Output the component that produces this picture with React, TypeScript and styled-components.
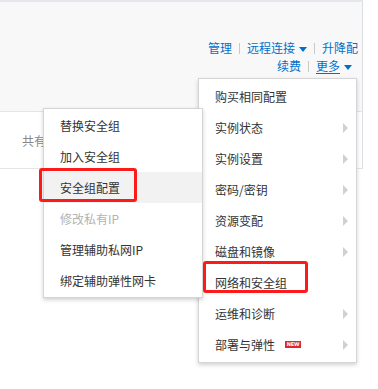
import React from "react";
import styled, { createGlobalStyle } from "styled-components";

const Global = createGlobalStyle`
  html, body { margin: 0; padding: 0; background: #fff; }
  body { font-family: "Noto Sans CJK SC", "Noto Sans", sans-serif; font-size: 12px; color: #333; }
`;

const Page = styled.div`
  position: relative;
  width: 378px;
  height: 389px;
  overflow: hidden;
  background: #fff;
`;

const Panel = styled.div`
  width: 362px;
  border-top: 2px solid #e4e8ec;
  border-right: 1px solid #dcdfe3;
  display: flex;
  flex-direction: column;
`;

const Header = styled.div`
  height: 110px;
  background: #f8f8f8;
  border-bottom: 1px solid #e5e5e5;
  display: flex;
  flex-direction: column;
  align-items: flex-end;
  padding: 37px 4px 0 0;
  box-sizing: border-box;
`;

const ActionRow = styled.div`
  display: flex;
  align-items: center;
  height: 18px;
  line-height: 18px;
`;

const Link = styled.span<{ $underline?: boolean }>`
  color: #0070cc;
  font-size: 12px;
  white-space: nowrap;
  text-decoration: ${(p) => (p.$underline ? "underline" : "none")};
  text-underline-offset: 2px;
  display: inline-flex;
  align-items: center;
`;

const Sep = styled.span`
  display: inline-block;
  width: 1px;
  height: 11px;
  background: #c9c9c9;
  margin: 0 7px;
`;

const Caret = styled.span`
  display: inline-block;
  width: 0;
  height: 0;
  border-left: 4px solid transparent;
  border-right: 4px solid transparent;
  border-top: 5px solid #0070cc;
  margin-left: 4px;
  margin-top: 2px;
`;

const Spacer = styled.span`
  width: 6px;
`;

const InfoRow = styled.div`
  height: 56px;
  border-bottom: 1px solid #e5e5e5;
  display: flex;
  align-items: center;
  padding-left: 22px;
  color: #888;
  font-size: 12px;
`;

const Menu = styled.div<{ $left: number; $top: number; $width: number; $z: number }>`
  position: absolute;
  left: ${(p) => p.$left}px;
  top: ${(p) => p.$top}px;
  width: ${(p) => p.$width}px;
  z-index: ${(p) => p.$z};
  background: #fff;
  border: 1px solid #d5d5d5;
  box-shadow: 0 2px 4px rgba(0, 0, 0, 0.18);
  box-sizing: border-box;
  display: flex;
  flex-direction: column;
`;

const MenuList = styled.div<{ $pad: number }>`
  padding: ${(p) => p.$pad}px 0;
  display: flex;
  flex-direction: column;
`;

const Item = styled.div<{ $active?: boolean; $disabled?: boolean }>`
  height: 31px;
  display: flex;
  align-items: center;
  padding: 0 8px 0 16px;
  font-size: 12px;
  color: ${(p) => (p.$disabled ? "#b3b3b3" : "#333")};
  background: ${(p) => (p.$active ? "#f2f2f2" : "transparent")};
  white-space: nowrap;
`;

const Label = styled.span`
  flex: 1;
  display: flex;
  align-items: center;
`;

const Arrow = styled.span`
  width: 0;
  height: 0;
  border-top: 5px solid transparent;
  border-bottom: 5px solid transparent;
  border-left: 5px solid #d0d0d0;
`;

const NewBadge = styled.span`
  display: inline-flex;
  align-items: center;
  justify-content: center;
  width: 16px;
  height: 7px;
  margin-left: 10px;
  background: #e0262e;
  color: #fff;
  font-family: "DejaVu Sans", sans-serif;
  font-size: 5px;
  font-weight: bold;
  line-height: 7px;
  letter-spacing: -0.2px;
`;

const Highlight = styled.div<{ $left: number; $top: number; $w: number; $h: number }>`
  position: absolute;
  left: ${(p) => p.$left}px;
  top: ${(p) => p.$top}px;
  width: ${(p) => p.$w}px;
  height: ${(p) => p.$h}px;
  border: 3px solid #fc1b1b;
  border-radius: 3px;
  box-sizing: border-box;
  z-index: 5;
`;

const mainItems: { label: string; arrow?: boolean; isNew?: boolean }[] = [
  { label: "购买相同配置" },
  { label: "实例状态", arrow: true },
  { label: "实例设置", arrow: true },
  { label: "密码/密钥", arrow: true },
  { label: "资源变配", arrow: true },
  { label: "磁盘和镜像", arrow: true },
  { label: "网络和安全组" },
  { label: "运维和诊断", arrow: true },
  { label: "部署与弹性", arrow: true, isNew: true },
];

const subItems: { label: string; active?: boolean; disabled?: boolean }[] = [
  { label: "替换安全组" },
  { label: "加入安全组" },
  { label: "安全组配置", active: true },
  { label: "修改私有IP", disabled: true },
  { label: "管理辅助私网IP" },
  { label: "绑定辅助弹性网卡" },
];

export default function App() {
  return (
    <Page>
      <Global />
      <Panel>
        <Header>
          <ActionRow>
            <Link>管理</Link>
            <Sep />
            <Link>
              远程连接
              <Caret />
            </Link>
            <Sep />
            <Link>升降配</Link>
          </ActionRow>
          <ActionRow>
            <Link>续费</Link>
            <Sep />
            <Link>
              <Link $underline>更多</Link>
              <Caret />
            </Link>
            <Spacer />
          </ActionRow>
        </Header>
        <InfoRow>共有</InfoRow>
      </Panel>

      <Menu $left={198} $top={78} $width={159} $z={2}>
        <MenuList $pad={2}>
          {mainItems.map((it) => (
            <Item key={it.label}>
              <Label>
                {it.label}
                {it.isNew && <NewBadge>NEW</NewBadge>}
              </Label>
              {it.arrow && <Arrow />}
            </Item>
          ))}
        </MenuList>
      </Menu>

      <Menu $left={43} $top={108} $width={160} $z={3}>
        <MenuList $pad={1}>
          {subItems.map((it) => (
            <Item key={it.label} $active={it.active} $disabled={it.disabled}>
              <Label>{it.label}</Label>
            </Item>
          ))}
        </MenuList>
      </Menu>

      <Highlight $left={39} $top={168} $w={98} $h={34} />
      <Highlight $left={203} $top={261} $w={105} $h={32} />
    </Page>
  );
}
